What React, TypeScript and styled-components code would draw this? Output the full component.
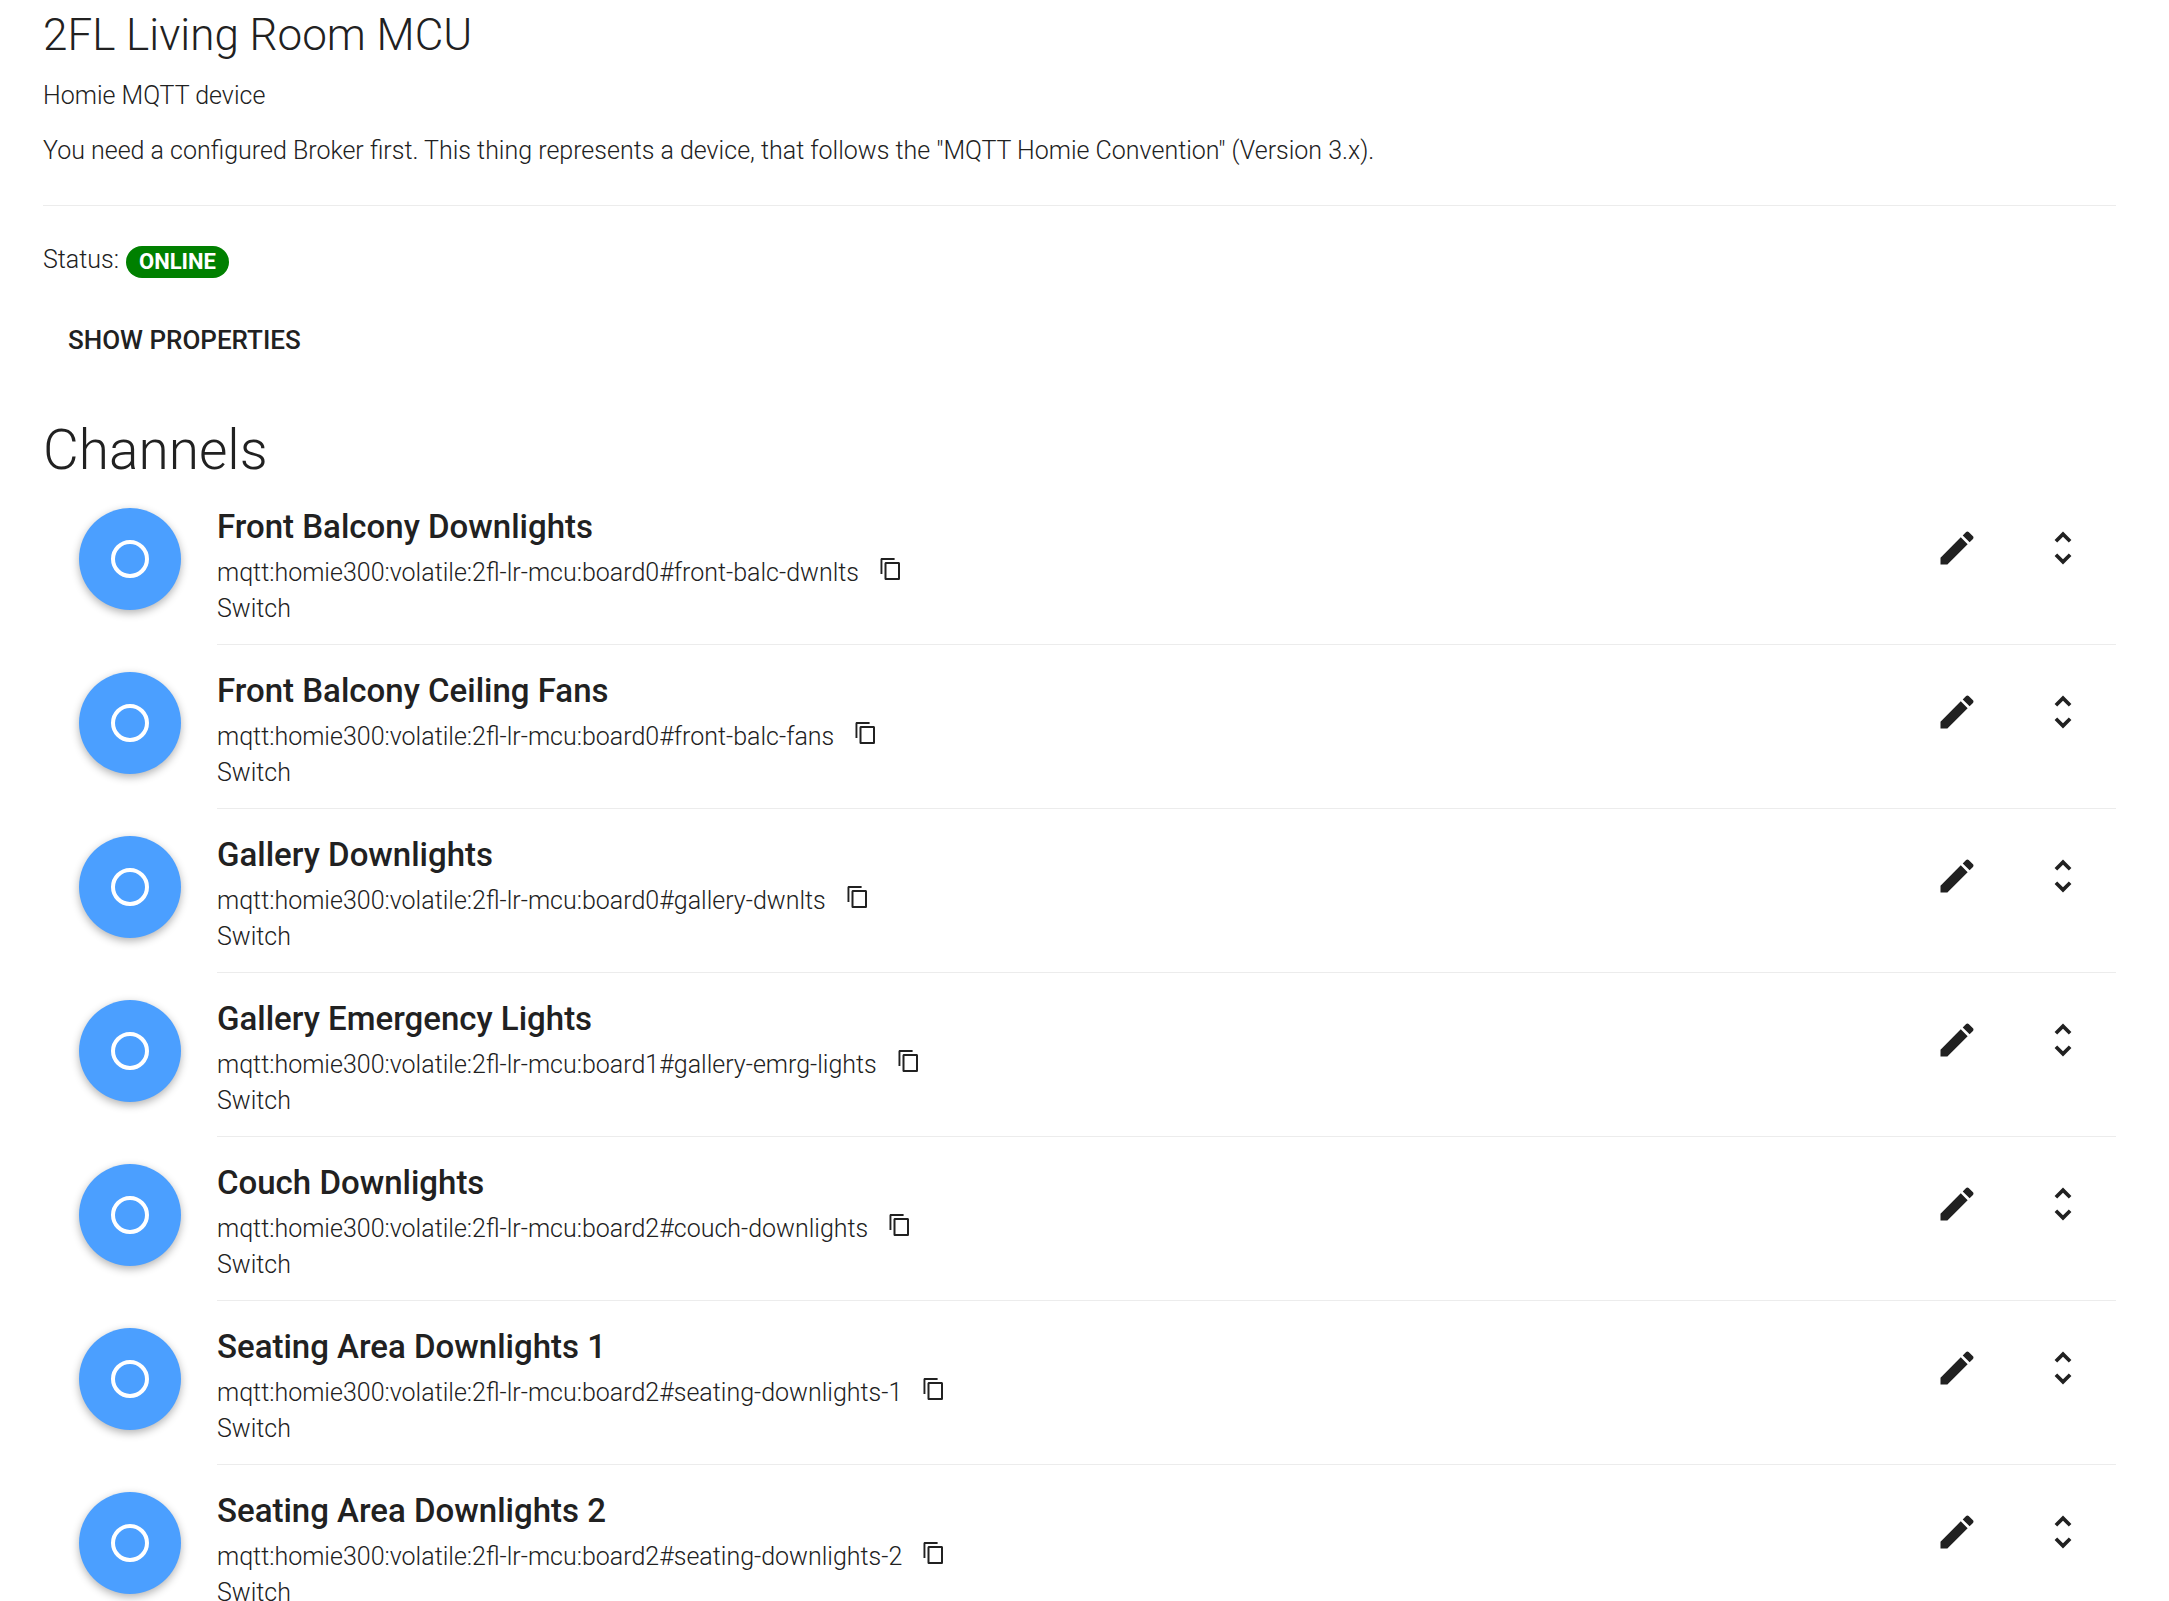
import React from 'react';
import styled, { createGlobalStyle } from 'styled-components';

const GlobalStyle = createGlobalStyle`
  *, *::before, *::after { box-sizing: border-box; }
  html { scrollbar-width: none; }
  body {
    margin: 0;
    background: #fff;
    color: #212121;
    font-family: Roboto, "Liberation Sans", sans-serif;
    font-size: 25px;
    font-weight: 300;
    line-height: 36px;
  }
`;

const Page = styled.main`
  display: flex;
  flex-direction: column;
  padding: 9px 53px 0 43px;
`;

const Header = styled.header`
  display: flex;
  flex-direction: column;
  padding-bottom: 36px;
  border-bottom: 1px solid #ececec;
`;

const ThingTitle = styled.h1`
  margin: 0 0 17px;
  font-size: 44px;
  font-weight: 300;
  line-height: 52px;
`;

const Text = styled.p`
  margin: 0;
  & + & { margin-top: 19px; }
`;

const Status = styled.div`
  display: flex;
  align-items: center;
  gap: 7px;
  margin-top: 36px;
`;

const Badge = styled.span`
  margin-top: 4px;
  padding: 0 13px;
  border-radius: 16px;
  background: #008000;
  color: #fff;
  font-size: 22px;
  font-weight: 700;
  line-height: 32px;
`;

const PropertiesButton = styled.button`
  align-self: flex-start;
  margin-top: 34px;
  padding: 0 25px;
  border: 0;
  background: none;
  color: inherit;
  font: inherit;
  font-size: 26px;
  font-weight: 500;
  line-height: 56px;
  text-transform: uppercase;
  cursor: pointer;
`;

const SectionTitle = styled.h2`
  margin: 51px 0 0;
  font-size: 55px;
  font-weight: 300;
  line-height: 62px;
`;

const ChannelList = styled.ul`
  margin: 0;
  padding: 0 0 0 36px;
  list-style: none;
`;

const Channel = styled.li`
  display: flex;
  align-items: stretch;
  gap: 36px;
  min-height: 164px;
`;

const KindIcon = styled.div`
  display: flex;
  flex: none;
  align-items: center;
  justify-content: center;
  width: 102px;
  height: 102px;
  margin-top: 27px;
  border-radius: 50%;
  background: #4b9fff;
  box-shadow: 0 3px 9px rgba(0, 0, 0, 0.3);
`;

const Ring = styled.span`
  width: 38px;
  height: 38px;
  border: 4px solid #fff;
  border-radius: 50%;
`;

const Content = styled.div`
  display: flex;
  flex: 1;
  min-width: 0;
  padding-top: 24px;
  border-bottom: 1px solid #ececec;
`;

const Details = styled.div`
  flex: 1;
  min-width: 0;
`;

const ChannelName = styled.h3`
  margin: 0 0 6px;
  font-size: 33px;
  font-weight: 500;
  line-height: 44px;
`;

const Uid = styled.div`
  display: flex;
  align-items: center;
  gap: 20px;
`;

const Actions = styled.div`
  display: flex;
  align-items: center;
  gap: 62px;
  height: 86px;
  padding-right: 31px;
`;

const IconButton = styled.button`
  display: flex;
  padding: 0;
  border: 0;
  background: none;
  color: inherit;
  cursor: pointer;
`;

const CopyButton = styled(IconButton)`
  padding-bottom: 8px;
`;

const Icon = styled.svg<{ $size: number }>`
  display: block;
  width: ${(p) => p.$size}px;
  height: ${(p) => p.$size}px;
  fill: currentColor;
`;

const CopyIcon = () => (
  <Icon $size={24} viewBox="0 0 24 24" aria-hidden="true">
    <path d="M15.6 1H3C1.9 1 1.5 1.6 1.5 2.5V17H3.4V3H15.6V1zM19.4 5H7.2C6.1 5 5.5 5.6 5.5 6.5V21.4C5.5 22.4 6.1 23 7.2 23H19.4C20.5 23 21 22.4 21 21.4V6.5C21 5.6 20.5 5 19.4 5zM19 21H7.5V7H19V21z" />
  </Icon>
);

const EditIcon = () => (
  <Icon $size={44} viewBox="0 0 24 24" aria-hidden="true">
    <path d="M3 17.25V21h3.75L17.81 9.94l-3.75-3.75L3 17.25zM20.71 7.04c.39-.39.39-1.02 0-1.41l-2.34-2.34c-.39-.39-1.02-.39-1.41 0l-1.83 1.83 3.75 3.75 1.83-1.83z" />
  </Icon>
);

const UnfoldIcon = () => (
  <Icon $size={44} viewBox="0 0 24 24" aria-hidden="true">
    <path d="M12 5.83L15.17 9l1.41-1.41L12 3 7.41 7.59 8.83 9 12 5.83zm0 12.34L8.83 15l-1.41 1.41L12 21l4.59-4.59L15.17 15 12 18.17z" />
  </Icon>
);

const channels = [
  { name: 'Front Balcony Downlights', id: 'board0#front-balc-dwnlts' },
  { name: 'Front Balcony Ceiling Fans', id: 'board0#front-balc-fans' },
  { name: 'Gallery Downlights', id: 'board0#gallery-dwnlts' },
  { name: 'Gallery Emergency Lights', id: 'board1#gallery-emrg-lights' },
  { name: 'Couch Downlights', id: 'board2#couch-downlights' },
  { name: 'Seating Area Downlights 1', id: 'board2#seating-downlights-1' },
  { name: 'Seating Area Downlights 2', id: 'board2#seating-downlights-2' },
];

export default function App() {
  return (
    <>
      <GlobalStyle />
      <Page>
        <Header>
          <ThingTitle>2FL Living Room MCU</ThingTitle>
          <Text>Homie MQTT device</Text>
          <Text>
            You need a configured Broker first. This thing represents a device, that follows the
            "MQTT Homie Convention" (Version 3.x).
          </Text>
        </Header>
        <Status>
          Status: <Badge>ONLINE</Badge>
        </Status>
        <PropertiesButton type="button">Show properties</PropertiesButton>
        <SectionTitle>Channels</SectionTitle>
        <ChannelList>
          {channels.map((channel) => (
            <Channel key={channel.id}>
              <KindIcon>
                <Ring />
              </KindIcon>
              <Content>
                <Details>
                  <ChannelName>{channel.name}</ChannelName>
                  <Uid>
                    <span>mqtt:homie300:volatile:2fl-lr-mcu:{channel.id}</span>
                    <CopyButton type="button" aria-label="Copy channel UID">
                      <CopyIcon />
                    </CopyButton>
                  </Uid>
                  <div>Switch</div>
                </Details>
                <Actions>
                  <IconButton type="button" aria-label="Edit channel">
                    <EditIcon />
                  </IconButton>
                  <IconButton type="button" aria-label="Expand channel">
                    <UnfoldIcon />
                  </IconButton>
                </Actions>
              </Content>
            </Channel>
          ))}
        </ChannelList>
      </Page>
    </>
  );
}
